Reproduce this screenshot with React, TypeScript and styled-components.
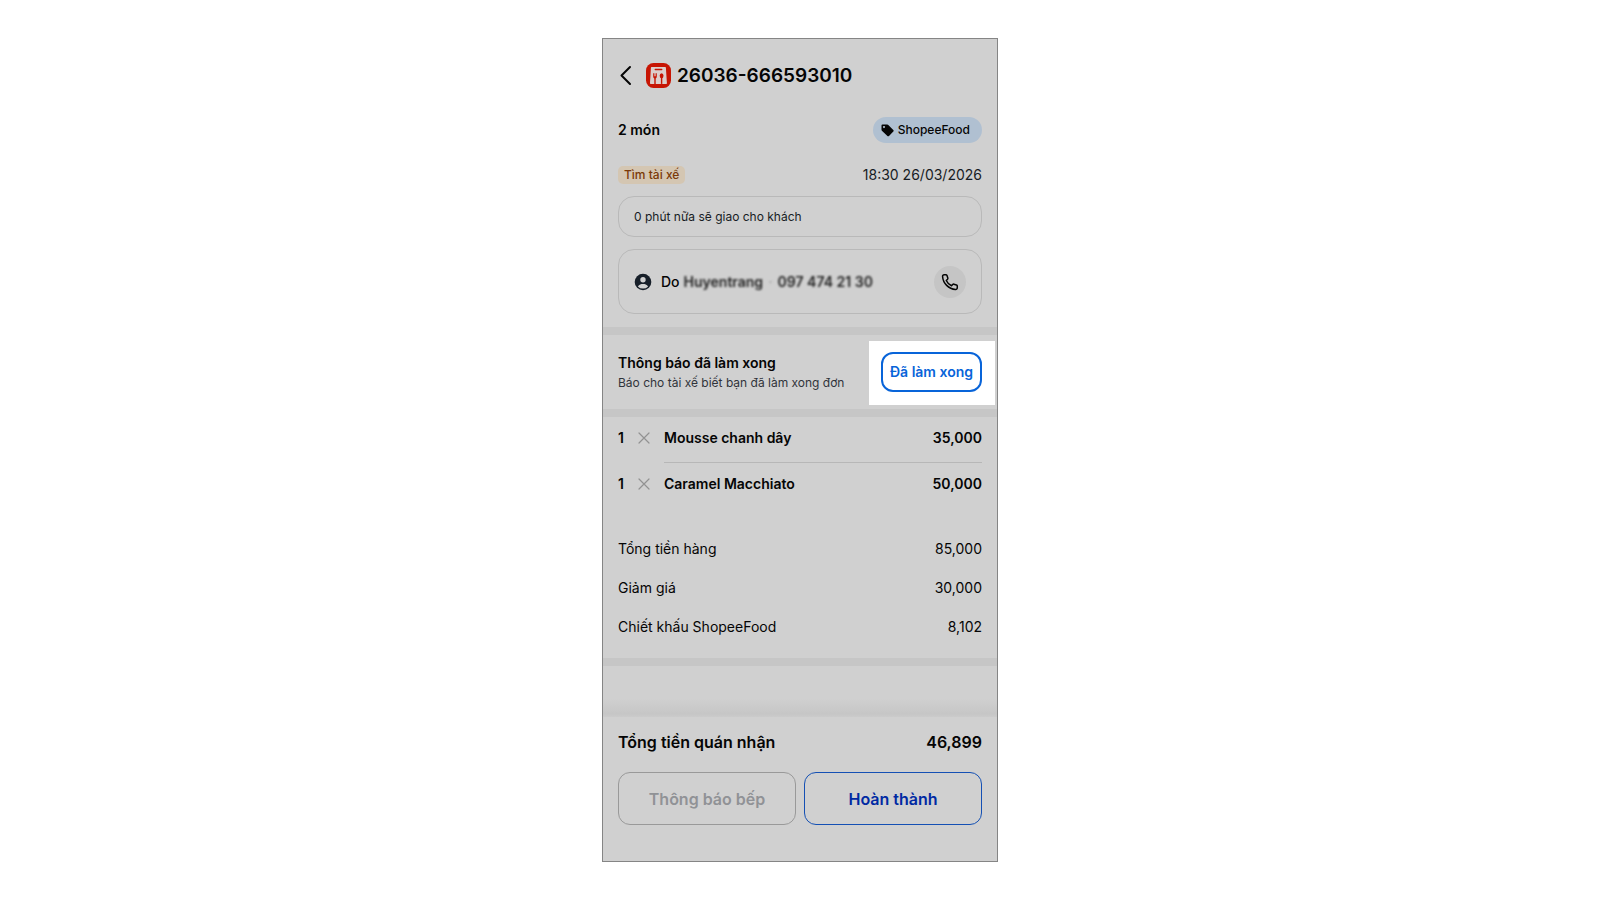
import React from "react";
import styled, { createGlobalStyle } from "styled-components";

const GlobalStyle = createGlobalStyle`
  *, *::before, *::after { box-sizing: border-box; }
  body {
    margin: 0;
    background: #fff;
    color: #050505;
    font-family: Inter, "Noto Sans", sans-serif;
    font-size: 14px;
    line-height: 20px;
  }
  button { font: inherit; cursor: pointer; }
  svg { display: block; flex: none; }
`;

const Page = styled.main`
  display: flex;
  justify-content: center;
  padding: 38px 16px;
`;

const Screen = styled.article`
  width: 100%;
  max-width: 396px;
  background: #d0d0d0;
  border: 1px solid #858585;
`;

const Header = styled.header`
  display: flex;
  align-items: center;
  padding: 24px 15px 22px;
`;

const BackButton = styled.button`
  width: 28px;
  padding: 0;
  border: 0;
  background: none;
  color: #050505;
`;

const OrderCode = styled.h1`
  margin: 0 0 0 6px;
  font-size: 19px;
  line-height: 24px;
  font-weight: 600;
`;

const Overview = styled.section`
  padding: 7px 15px 13px;
`;

const Row = styled.div`
  display: flex;
  align-items: center;
  justify-content: space-between;
`;

const Count = styled.strong`
  font-weight: 600;
`;

const Channel = styled.span`
  display: flex;
  align-items: center;
  gap: 4px;
  height: 26px;
  padding: 0 12px 0 8px;
  border-radius: 13px;
  background: #b0c0d1;
  font-size: 12px;
  font-weight: 500;
`;

const StatusRow = styled(Row)`
  margin-top: 22px;
`;

const Status = styled.span`
  padding: 0 6px;
  border-radius: 5px;
  background: #d4c6b2;
  color: #7b3908;
  font-size: 12px;
  line-height: 18px;
  font-weight: 500;
`;

const OrderTime = styled.time`
  color: #171c24;
`;

const Panel = styled.div<{ $tall?: boolean }>`
  display: flex;
  align-items: center;
  height: ${(p) => (p.$tall ? 65 : 41)}px;
  margin-top: ${(p) => (p.$tall ? 12 : 11)}px;
  padding: 0 15px;
  border: 1px solid #b9b9b9;
  border-radius: 16px;
  color: ${(p) => (p.$tall ? "#050505" : "#171c24")};
  font-size: ${(p) => (p.$tall ? 14 : 12)}px;
`;

const Customer = styled.span`
  display: flex;
  gap: 4px;
  margin-left: 9px;
  font-weight: 500;
`;

const Masked = styled.span`
  display: flex;
  gap: 5px;
  color: #222;
  font-weight: 600;
  filter: blur(1px);
`;

const Dot = styled.span`
  color: #aaa;
`;

const CallButton = styled.button`
  display: grid;
  place-items: center;
  width: 32px;
  height: 32px;
  margin-left: auto;
  padding: 0;
  border: 0;
  border-radius: 50%;
  background: #c5c5c5;
  color: #050505;
`;

const Band = styled.div`
  height: 8px;
  background: #c6c6c6;
`;

const Notice = styled.section`
  display: flex;
  align-items: center;
  justify-content: space-between;
  padding: 6px 2px 4px 15px;
`;

const NoticeTitle = styled.h2`
  margin: 0;
  font-size: 14px;
  line-height: 20px;
  font-weight: 600;
`;

const NoticeText = styled.p`
  margin: 0;
  color: #30343b;
  font-size: 12px;
  line-height: 20px;
`;

const Spotlight = styled.div`
  padding: 11px 13px 13px 12px;
  background: #fff;
`;

const DoneButton = styled.button`
  width: 101px;
  height: 40px;
  padding: 0;
  border: 2px solid #0864d9;
  border-radius: 12px;
  background: #fff;
  color: #0864d9;
  font-size: 14px;
  font-weight: 600;
  white-space: nowrap;
`;

const Items = styled.ul`
  margin: 0;
  padding: 0 15px 13px;
  list-style: none;
`;

const Item = styled.li`
  display: flex;
  align-items: flex-start;
  font-weight: 600;

  & + & > * { border-top: 1px solid transparent; }
  & + & > div { border-top-color: #b7b7b7; }
`;

const Multiplier = styled.span`
  display: flex;
  align-items: center;
  padding-top: 11px;
`;

const Quantity = styled.span`
  width: 20px;
`;

const ItemBody = styled.div`
  display: flex;
  flex: 1;
  justify-content: space-between;
  margin-left: 14px;
  padding: 11px 0 14px;
`;

const Summary = styled.dl`
  display: grid;
  gap: 19px;
  margin: 0;
  padding: 18px 15px 21px;
`;

const SummaryRow = styled(Row)`
  dt, dd { margin: 0; }
`;

const Spacer = styled.div`
  height: 51px;
  background: linear-gradient(to bottom, #d0d0d0 64%, #c6c6c6 94%, #cbcbcb);
`;

const Footer = styled.footer`
  padding: 13px 15px 36px;
`;

const Total = styled(Row)`
  font-size: 16px;
  line-height: 24px;
  font-weight: 600;
`;

const Actions = styled.div`
  display: grid;
  grid-template-columns: 1fr 1fr;
  gap: 8px;
  margin-top: 18px;
`;

const ActionButton = styled.button<{ $primary?: boolean }>`
  height: 53px;
  border: 1px solid ${(p) => (p.$primary ? "#1450b4" : "#999")};
  border-radius: 12px;
  background: transparent;
  color: ${(p) => (p.$primary ? "#0029a3" : "#909296")};
  font-size: 16px;
  font-weight: 600;
`;

const BackIcon = () => (
  <svg width="14" height="24" viewBox="0 0 14 24" fill="none" stroke="currentColor" strokeWidth="2" strokeLinecap="round" strokeLinejoin="round">
    <path d="M12 3 3.500 11.500l8.500 8.500" />
  </svg>
);

const FoodLogo = () => (
  <svg width="25" height="25" viewBox="0 0 25 25" aria-hidden="true">
    <rect width="25" height="25" rx="7.500" fill="#c71503" />
    <path d="M5.600 4.800h13.600l1 15.400H4.700Z" fill="#dccfcc" stroke="#dccfcc" strokeWidth="1.400" strokeLinejoin="round" />
    <path d="M9.300 6.600h6.400" stroke="#c71503" strokeWidth="1.500" strokeLinecap="round" />
    <path d="M7.200 10.300v3.200q0 1.500 1.100 2V20.900h1.400v-5.400q1.100-.5 1.100-2v-3.200H10v2.900h-.6v-2.900h-.8v2.900H8v-2.900Z" fill="#c71503" />
    <ellipse cx="15.600" cy="12.800" rx="1.900" ry="2.500" fill="#c71503" />
    <path d="M15.600 14v6.900" stroke="#c71503" strokeWidth="1.400" />
  </svg>
);

const TagIcon = () => (
  <svg width="13" height="13" viewBox="0 0 13 13" aria-hidden="true">
    <path fillRule="evenodd" d="M1.500.5h4.800q.6 0 1 .4l5 5q.8.8 0 1.600L8 11.900q-.8.8-1.600 0L.9 6.800Q.5 6.400.5 5.800V1.500q0-1 1-1ZM3 2.100a1 1 0 1 0 .01 0Z" fill="#050505" />
  </svg>
);

const UserIcon = () => (
  <svg width="18" height="18" viewBox="0 0 18 18" aria-hidden="true">
    <circle cx="9" cy="9" r="8.300" fill="#171f29" />
    <circle cx="9" cy="6.800" r="2.700" fill="#d0d0d0" />
    <path d="M3.900 13.400C5.200 11.500 7 11 9 11s3.800.5 5.100 2.400A6.800 6.800 0 0 1 9 15.600a6.800 6.800 0 0 1-5.100-2.200Z" fill="#d0d0d0" />
  </svg>
);

const PhoneIcon = () => (
  <svg width="18" height="18" viewBox="0 0 24 24" fill="none" stroke="currentColor" strokeWidth="2" strokeLinejoin="round" aria-hidden="true">
    <path d="M6.800 2.300c.6.100 1 .5 1.200 1.100l1.100 3.400c.2.600 0 1.200-.4 1.600L7 10c1.500 3.300 3.700 5.500 7 7l1.600-1.700c.4-.4 1-.6 1.600-.4l3.400 1.100c.6.200 1 .6 1.100 1.200v2.600c0 1.300-1 2.200-2.300 2.100C10.200 21.300 2.700 13.800 2.100 4.600 2 3.300 2.900 2.300 4.200 2.300Z" />
  </svg>
);

const TimesIcon = () => (
  <svg width="12" height="12" viewBox="0 0 12 12" fill="none" stroke="#929292" strokeWidth="1.200" strokeLinecap="round" aria-label="x">
    <path d="M1 1l10 10M11 1 1 11" />
  </svg>
);

const items = [
  { quantity: 1, name: "Mousse chanh dây", price: "35,000" },
  { quantity: 1, name: "Caramel Macchiato", price: "50,000" },
];

const summary = [
  ["Tổng tiền hàng", "85,000"],
  ["Giảm giá", "30,000"],
  ["Chiết khấu ShopeeFood", "8,102"],
];

export default function App() {
  return (
    <>
      <GlobalStyle />
      <Page>
        <Screen>
          <Header>
            <BackButton type="button" aria-label="Quay lại"><BackIcon /></BackButton>
            <FoodLogo />
            <OrderCode>26036-666593010</OrderCode>
          </Header>
          <Overview>
            <Row>
              <Count>2 món</Count>
              <Channel><TagIcon />ShopeeFood</Channel>
            </Row>
            <StatusRow>
              <Status>Tìm tài xế</Status>
              <OrderTime dateTime="2026-03-26T18:30">18:30 26/03/2026</OrderTime>
            </StatusRow>
            <Panel>0 phút nữa sẽ giao cho khách</Panel>
            <Panel $tall>
              <UserIcon />
              <Customer>
                Do
                <Masked>
                  <span>Huyentrang</span>
                  <Dot>·</Dot>
                  <span>097 474 21 30</span>
                </Masked>
              </Customer>
              <CallButton type="button" aria-label="Gọi khách"><PhoneIcon /></CallButton>
            </Panel>
          </Overview>
          <Band />
          <Notice>
            <div>
              <NoticeTitle>Thông báo đã làm xong</NoticeTitle>
              <NoticeText>Báo cho tài xế biết bạn đã làm xong đơn</NoticeText>
            </div>
            <Spotlight>
              <DoneButton type="button">Đã làm xong</DoneButton>
            </Spotlight>
          </Notice>
          <Band />
          <Items>
            {items.map((item) => (
              <Item key={item.name}>
                <Multiplier>
                  <Quantity>{item.quantity}</Quantity>
                  <TimesIcon />
                </Multiplier>
                <ItemBody>
                  <span>{item.name}</span>
                  <span>{item.price}</span>
                </ItemBody>
              </Item>
            ))}
          </Items>
          <Summary>
            {summary.map(([label, value]) => (
              <SummaryRow key={label}>
                <dt>{label}</dt>
                <dd>{value}</dd>
              </SummaryRow>
            ))}
          </Summary>
          <Band />
          <Spacer />
          <Footer>
            <Total>
              <span>Tổng tiền quán nhận</span>
              <span>46,899</span>
            </Total>
            <Actions>
              <ActionButton type="button">Thông báo bếp</ActionButton>
              <ActionButton type="button" $primary>Hoàn thành</ActionButton>
            </Actions>
          </Footer>
        </Screen>
      </Page>
    </>
  );
}
